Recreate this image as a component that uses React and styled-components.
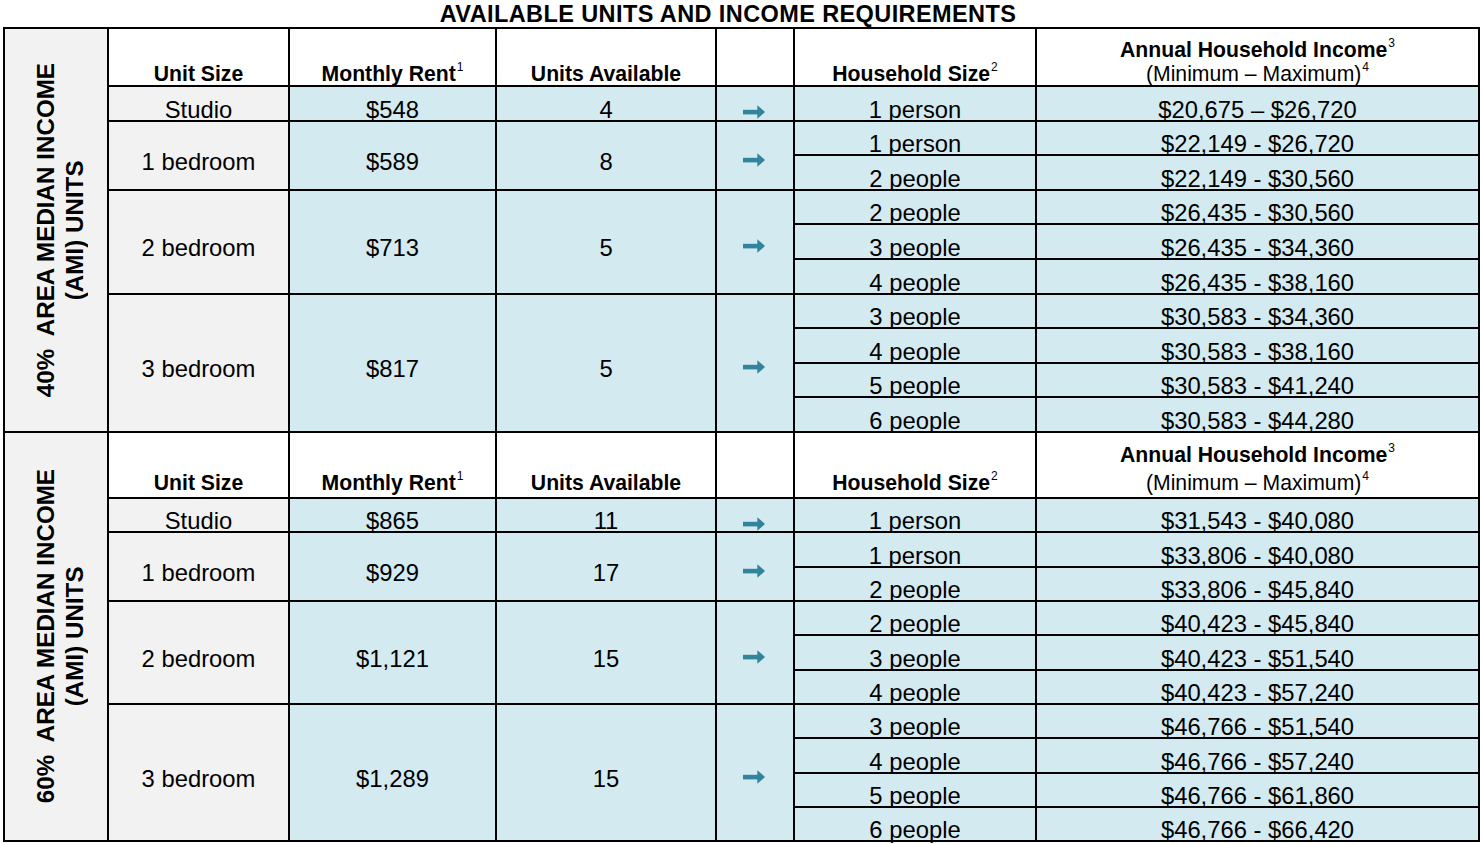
import React from "react";
import styled, { createGlobalStyle } from "styled-components";

const BLUE = "#d4eaf1";
const GREY = "#f2f2f2";
const TEAL = "#31849b";

const GlobalStyle = createGlobalStyle`
  html, body {
    margin: 0;
    padding: 0;
    background: #fff;
  }
  body {
    font-family: "Liberation Sans", Arial, sans-serif;
    color: #000;
  }
`;

const people = (n) => (n === 1 ? "1 person" : `${n} people`);

// one entry per income band, rows of each unit size follow household size
const sections = [
  {
    label: "40%",
    headerHeight: 56,
    headerLine: 24,
    headerShift: -1,
    rowHeights: [33, 32, 33, 32, 33, 33, 32, 33, 32, 33],
    units: [
      { size: "Studio", rent: "$548", available: 4, from: 1, incomes: ["$20,675 – $26,720"] },
      { size: "1 bedroom", rent: "$589", available: 8, from: 1, incomes: ["$22,149 - $26,720", "$22,149 - $30,560"] },
      {
        size: "2 bedroom",
        rent: "$713",
        available: 5,
        from: 2,
        incomes: ["$26,435 - $30,560", "$26,435 - $34,360", "$26,435 - $38,160"],
      },
      {
        size: "3 bedroom",
        rent: "$817",
        available: 5,
        from: 3,
        incomes: ["$30,583 - $34,360", "$30,583 - $38,160", "$30,583 - $41,240", "$30,583 - $44,280"],
      },
    ],
  },
  {
    label: "60%",
    headerHeight: 64,
    headerLine: 28,
    headerShift: 0,
    rowHeights: [32, 33, 32, 32, 33, 32, 32, 33, 32, 32],
    units: [
      { size: "Studio", rent: "$865", available: 11, from: 1, incomes: ["$31,543 - $40,080"] },
      { size: "1 bedroom", rent: "$929", available: 17, from: 1, incomes: ["$33,806 - $40,080", "$33,806 - $45,840"] },
      {
        size: "2 bedroom",
        rent: "$1,121",
        available: 15,
        from: 2,
        incomes: ["$40,423 - $45,840", "$40,423 - $51,540", "$40,423 - $57,240"],
      },
      {
        size: "3 bedroom",
        rent: "$1,289",
        available: 15,
        from: 3,
        incomes: ["$46,766 - $51,540", "$46,766 - $57,240", "$46,766 - $61,860", "$46,766 - $66,420"],
      },
    ],
  },
];

const Arrow = () => (
  <svg width="22" height="14" viewBox="0 0 22 14">
    <rect x="0" y="4.8" width="15" height="4.6" fill={TEAL} />
    <polygon points="14.3,0.2 22,7 14.3,13.8" fill={TEAL} />
  </svg>
);

const Section = ({ section }) => {
  const rowCount = section.units.reduce((n, u) => n + u.incomes.length, 0);
  return (
    <>
      <LabelCell $span={rowCount + 1}>
        <LabelText>
          {section.label}  AREA MEDIAN INCOME
          <br />
          (AMI) UNITS
        </LabelText>
      </LabelCell>

      <HeadCell $lh={section.headerLine} $shift={section.headerShift}>
        <span>Unit Size</span>
      </HeadCell>
      <HeadCell $lh={section.headerLine} $shift={section.headerShift}>
        <span>
          Monthly Rent<Sup>1</Sup>
        </span>
      </HeadCell>
      <HeadCell $lh={section.headerLine} $shift={section.headerShift}>
        <span>Units Available</span>
      </HeadCell>
      <HeadCell $lh={section.headerLine} $shift={section.headerShift} />
      <HeadCell $lh={section.headerLine} $shift={section.headerShift}>
        <span>
          Household Size<Sup>2</Sup>
        </span>
      </HeadCell>
      <HeadCell $lh={section.headerLine} $shift={section.headerShift}>
        <span>
          Annual Household Income<Sup>3</Sup>
        </span>
        <Light>
          (Minimum – Maximum)<Sup>4</Sup>
        </Light>
      </HeadCell>

      {section.units.map((unit) => {
        const span = unit.incomes.length;
        return (
          <React.Fragment key={unit.size}>
            <BodyCell $span={span} $tone={GREY}>
              {unit.size}
            </BodyCell>
            <BodyCell $span={span} $tone={BLUE}>
              {unit.rent}
            </BodyCell>
            <BodyCell $span={span} $tone={BLUE}>
              {unit.available}
            </BodyCell>
            <ArrowCell $span={span} $single={span === 1}>
              <Arrow />
            </ArrowCell>
            {unit.incomes.map((income, i) => (
              <React.Fragment key={income + i}>
                <BodyCell $span={1} $tone={BLUE}>
                  {people(unit.from + i)}
                </BodyCell>
                <BodyCell $span={1} $tone={BLUE}>
                  {income}
                </BodyCell>
              </React.Fragment>
            ))}
          </React.Fragment>
        );
      })}
    </>
  );
};

const App = () => {
  const rows = sections
    .map((s) => [s.headerHeight, ...s.rowHeights].map((h) => `${h}px`).join(" "))
    .join(" ");

  return (
    <Page>
      <GlobalStyle />
      <Title>AVAILABLE UNITS AND INCOME REQUIREMENTS</Title>
      <Table $rows={rows}>
        {sections.map((s) => (
          <Section key={s.label} section={s} />
        ))}
      </Table>
    </Page>
  );
};

const Page = styled.div`
  width: 1482px;
  height: 844px;
  overflow: hidden;
  background: #fff;
`;

const Title = styled.h1`
  margin: 0;
  width: 1456px;
  height: 27px;
  padding-top: 2px;
  box-sizing: border-box;
  text-align: center;
  font-size: 23.5px;
  line-height: 25px;
  font-weight: 700;
  letter-spacing: 0.4px;
`;

const Table = styled.div`
  display: grid;
  grid-template-columns: 102px 179px 205px 218px 76px 240px 441px;
  grid-template-rows: ${(p) => p.$rows};
  gap: 2px;
  padding: 2px;
  margin-left: 3px;
  width: fit-content;
  background: #000;
`;

const LabelCell = styled.div`
  grid-column: 1;
  grid-row: span ${(p) => p.$span};
  background: ${GREY};
  display: flex;
  align-items: center;
  justify-content: center;
  padding-left: 7px;
`;

const LabelText = styled.div`
  writing-mode: vertical-rl;
  transform: rotate(180deg);
  white-space: pre;
  text-align: center;
  font-weight: 700;
  font-size: 24.2px;
  line-height: 29px;
`;

const HeadCell = styled.div`
  background: #fff;
  display: flex;
  flex-direction: column;
  justify-content: flex-end;
  align-items: center;
  text-align: center;
  font-weight: 700;
  font-size: 21.2px;
  line-height: ${(p) => p.$lh}px;
  white-space: nowrap;

  & > *:last-child {
    margin-bottom: ${(p) => p.$shift}px;
  }
`;

const Light = styled.span`
  font-weight: 400;
`;

const Sup = styled.sup`
  font-size: 12px;
  font-weight: 400;
  line-height: 0;
  vertical-align: 10px;
  margin-left: 1px;
`;

const BodyCell = styled.div`
  grid-row: span ${(p) => p.$span};
  background: ${(p) => p.$tone};
  display: flex;
  align-items: center;
  justify-content: center;
  padding-top: 12px;
  font-size: 23.8px;
  line-height: 1;
  white-space: nowrap;
`;

const ArrowCell = styled.div`
  grid-row: span ${(p) => p.$span};
  background: ${BLUE};
  display: flex;
  align-items: center;
  justify-content: center;
  padding-top: ${(p) => (p.$single ? 17 : 8)}px;
  padding-right: 3px;

  svg {
    display: block;
  }
`;

export default App;
